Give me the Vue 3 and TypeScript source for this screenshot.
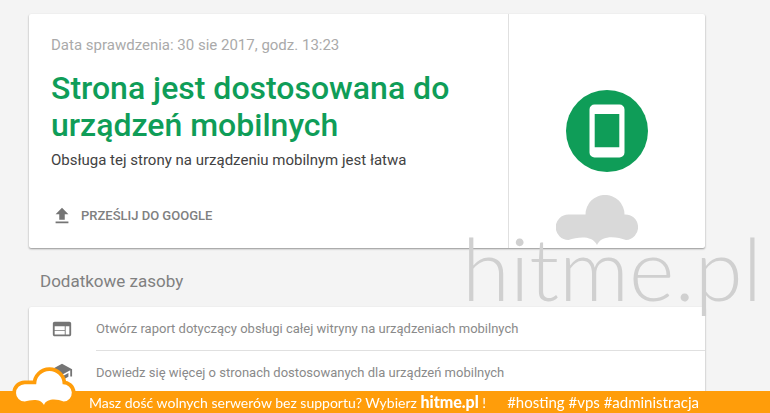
<script setup lang="ts">
interface Resource {
  label: string
  icon: string
}

const resources: Resource[] = [
  {
    label: 'Otwórz raport dotyczący obsługi całej witryny na urządzeniach mobilnych',
    icon: 'M20 4H4c-1.1 0-1.99.9-1.99 2L2 18c0 1.1.9 2 2 2h16c1.1 0 2-.9 2-2V6c0-1.1-.9-2-2-2zm-5 14H4v-4h11v4zm0-5H4V9h11v4zm5 5h-4V9h4v9z',
  },
  {
    label: 'Dowiedz się więcej o stronach dostosowanych dla urządzeń mobilnych',
    icon: 'M5 13.18v4L12 21l7-3.82v-4L12 17l-7-3.82zM12 3L1 9l11 6 9-4.91V17h2V9L12 3z',
  },
]

const tags: string[] = ['#hosting', '#vps', '#administracja']

const cloud =
  'M12.5 45A12.8 12.8 0 0 1 12.5 19.4H29.5A19.5 19.5 0 0 1 68.5 19.4A12.8 12.8 0 0 1 70 45C60 41 45 40 41 50C36 40 22 42 12.5 45Z'
</script>

<template>
  <main class="page">
    <section class="card result">
      <div class="summary">
        <p class="date">Data sprawdzenia: 30 sie 2017, godz. 13:23</p>
        <h1 class="title">Strona jest dostosowana do urządzeń mobilnych</h1>
        <p class="description">Obsługa tej strony na urządzeniu mobilnym jest łatwa</p>
        <button class="submit" type="button">
          <svg class="icon" viewBox="0 0 24 24" aria-hidden="true">
            <path d="M9 16h6v-6h4l-7-7-7 7h4zm-4 2h14v2H5z" />
          </svg>
          PRZEŚLIJ DO GOOGLE
        </button>
      </div>
      <div class="status">
        <svg class="badge" viewBox="0 0 82 82" aria-hidden="true">
          <circle cx="41" cy="41" r="41" fill="#0f9d58" />
          <path
            fill="#fff"
            fill-rule="evenodd"
            d="M28.5 14.5h25a5 5 0 0 1 5 5v43a5 5 0 0 1-5 5h-25a5 5 0 0 1-5-5v-43a5 5 0 0 1 5-5zM28.7 24v33.3h24.6V24z"
          />
        </svg>
      </div>
    </section>

    <h2 class="heading">Dodatkowe zasoby</h2>

    <ul class="card resources">
      <li v-for="item in resources" :key="item.label" class="resource">
        <svg class="icon" viewBox="0 0 24 24" aria-hidden="true">
          <path :d="item.icon" />
        </svg>
        <a class="link" href="#">{{ item.label }}</a>
      </li>
    </ul>

    <div class="watermark">
      <svg class="watermark-cloud" viewBox="0 0 82 50" aria-hidden="true">
        <path :d="cloud" />
      </svg>
      <span class="watermark-name">hitme.pl</span>
    </div>
  </main>

  <footer class="banner">
    <svg class="banner-cloud" viewBox="-6 -6 94 62" aria-hidden="true">
      <path :d="cloud" />
    </svg>
    <p class="slogan">
      Masz dość wolnych serwerów bez supportu? Wybierz <a class="brand" href="#">hitme.pl</a> !
    </p>
    <p class="tags">{{ tags.join(' ') }}</p>
  </footer>
</template>

<style>
body {
  margin: 0;
  background: #f4f4f4;
}
</style>

<style scoped>
.page {
  position: relative;
  padding: 14px 65px 16px 29px;
  font-family: Roboto, "Liberation Sans", sans-serif;
  color: #757575;
}

p,
h1,
h2,
ul {
  margin: 0;
  padding: 0;
  font-weight: 400;
}

.card {
  background: #fff;
  border-radius: 2px;
  box-shadow: 0 1px 2px rgba(0, 0, 0, 0.4);
}

.result {
  display: grid;
  grid-template-columns: 1fr 196px;
}

.summary {
  display: flex;
  flex-direction: column;
  align-items: flex-start;
  padding: 21px 48px 20px 22px;
  border-right: 1px solid #e0e0e0;
}

.date {
  font-size: 15px;
  line-height: 20px;
  color: #aaa;
}

.title {
  margin-top: 15px;
  font-size: 32px;
  line-height: 37px;
  font-weight: 500;
  color: #0f9d58;
}

.description {
  margin-top: 6px;
  font-size: 15px;
  line-height: 20px;
  color: #424242;
}

.submit {
  display: flex;
  align-items: center;
  gap: 8px;
  margin-top: 34px;
  padding: 0;
  border: 0;
  background: none;
  font: 500 13px/24px Roboto, "Liberation Sans", sans-serif;
  color: #808080;
}

.icon {
  flex: none;
  width: 22px;
  height: 22px;
  fill: #757575;
}

.status {
  display: flex;
  align-items: center;
  justify-content: center;
}

.badge {
  width: 82px;
  height: 82px;
}

.heading {
  margin: 22px 0 15px 11px;
  font-size: 17px;
  line-height: 22px;
  color: #808080;
}

.resources {
  list-style: none;
}

.resource {
  display: flex;
  align-items: center;
  gap: 23px;
  padding-left: 22px;
}

.link {
  flex: 1;
  font-size: 13px;
  line-height: 43px;
  color: #8a8a8a;
  text-decoration: none;
}

.resource + .resource .link {
  border-top: 1px solid #e0e0e0;
}

.watermark {
  position: absolute;
  top: 195px;
  right: 8px;
  display: flex;
  flex-direction: column;
  align-items: flex-start;
  color: #d0d0d0;
  pointer-events: none;
}

.watermark-cloud {
  width: 82px;
  height: 50px;
  margin-left: 94px;
  fill: #d9d9d9;
}

.watermark-name {
  margin-top: -20px;
  font-family: Lato, sans-serif;
  font-size: 87px;
  line-height: 86px;
  font-weight: 300;
}

.banner {
  position: fixed;
  right: 0;
  bottom: 0;
  left: 0;
  display: flex;
  align-items: center;
  gap: 13px;
  height: 22px;
  padding-left: 12px;
  background: #ff9d0a;
  font: 300 14px/22px Lato, "Open Sans", sans-serif;
  color: #fff;
}

.banner-cloud {
  flex: none;
  align-self: flex-end;
  width: 64px;
  height: 42px;
  margin-bottom: 4px;
}

.banner-cloud path {
  fill: #fff;
  stroke: #ff9d0a;
  stroke-width: 11px;
  paint-order: stroke;
}

.brand {
  font-size: 16px;
  font-weight: 900;
  color: #fff;
  text-decoration: none;
}

.tags {
  padding-left: 8px;
  font-size: 15px;
}
</style>
